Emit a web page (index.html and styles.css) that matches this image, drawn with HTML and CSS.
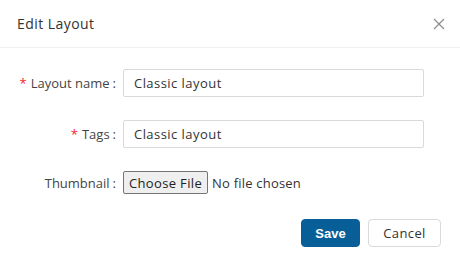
FILE: index.html
```html
<!DOCTYPE html>
<html lang="en">
<head>
  <meta charset="UTF-8" />
  <title>Edit Layout</title>
  <link rel="stylesheet" href="styles.css">
</head>
<body>
  <div class="dialog">
    <div class="dialog-header">
      <span class="dialog-title">Edit Layout</span>
      <button class="close-btn" aria-label="Close">
        <svg width="12" height="12" viewBox="0 0 12 12">
          <path d="M1 1L11 11M11 1L1 11" stroke="#8c8c8c" stroke-width="1.2" fill="none"/>
        </svg>
      </button>
    </div>

    <form class="dialog-body">
      <div class="form-row">
        <label class="form-label"><span class="req">*</span>Layout name<span class="colon">:</span></label>
        <input class="form-input" type="text" value="Classic layout">
      </div>
      <div class="form-row">
        <label class="form-label"><span class="req">*</span>Tags<span class="colon">:</span></label>
        <input class="form-input" type="text" value="Classic layout">
      </div>
      <div class="form-row file-row">
        <label class="form-label">Thumbnail<span class="colon">:</span></label>
        <input class="file-input" type="file">
      </div>
      <div class="dialog-footer">
        <button type="button" class="btn btn-primary">Save</button>
        <button type="button" class="btn btn-default">Cancel</button>
      </div>
    </form>
  </div>
</body>
</html>
```

FILE: styles.css
```css
* {
  box-sizing: border-box;
  margin: 0;
  padding: 0;
}

body {
  font-family: 'Open Sans', sans-serif;
  background: #fff;
  color: #333;
}

.dialog {
  width: 460px;
  height: 257px;
}

.dialog-header {
  height: 48px;
  padding: 0 15px 0 17px;
  display: flex;
  align-items: center;
  justify-content: space-between;
  border-bottom: 1px solid #efefef;
}

.dialog-title {
  font-size: 14px;
  letter-spacing: 0.45px;
  color: #333;
}

.close-btn {
  border: none;
  background: none;
  width: 12px;
  height: 12px;
  display: flex;
  cursor: pointer;
}

.dialog-body {
  padding: 21px 19px 0 0;
}

.form-row {
  display: flex;
  align-items: center;
  height: 28px;
  margin-bottom: 23px;
}

.file-row {
  height: 23px;
  margin-top: 1px;
  margin-bottom: 25px;
}

.form-label {
  width: 116px;
  text-align: right;
  font-size: 13px;
  color: #444;
  margin-right: 7px;
}

.req {
  color: #f5222d;
  margin-right: 4px;
}

.colon {
  margin-left: 3px;
}

.form-input {
  width: 301px;
  height: 28px;
  border: 1px solid #d9d9d9;
  border-radius: 2px;
  padding: 0 10px;
  font-family: inherit;
  font-size: 13px;
  letter-spacing: 0.45px;
  color: #333;
  outline: none;
}

.file-input {
  font-family: inherit;
  font-size: 13px;
  letter-spacing: 0.2px;
  color: #333;
}

.file-input::file-selector-button {
  font-family: inherit;
  font-size: 13px;
  letter-spacing: 0.35px;
  height: 23px;
  padding: 0 5px;
  margin-right: 4px;
  border: 1px solid #767676;
  border-radius: 2px;
  background: #efefef;
  color: #222;
}

.dialog-footer {
  display: flex;
  justify-content: flex-end;
  gap: 8px;
}

.btn {
  height: 28px;
  border-radius: 4px;
  font-size: 13px;
  cursor: pointer;
}

.btn-primary {
  width: 59px;
  background: #085f97;
  border: 1px solid #085f97;
  color: #fff;
  font-family: 'Liberation Sans', Arial, sans-serif;
  font-weight: bold;
}

.btn-default {
  width: 73px;
  background: #fff;
  border: 1px solid #d9d9d9;
  color: #333;
  font-family: inherit;
  letter-spacing: 0.4px;
}
```
